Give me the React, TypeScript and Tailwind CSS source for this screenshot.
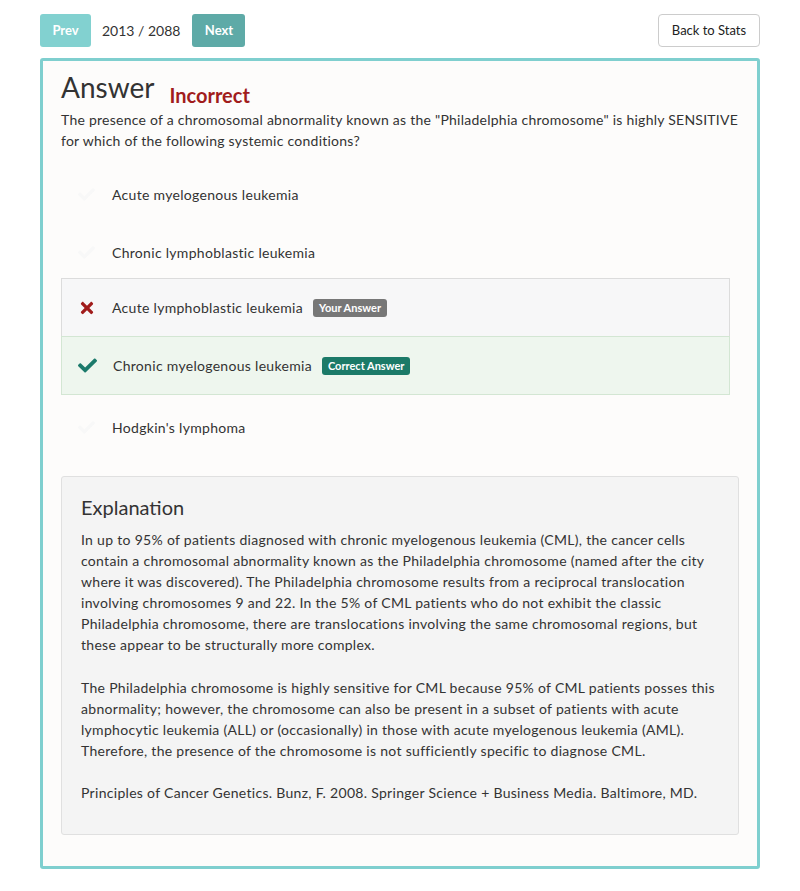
import { FaCheck, FaTimes } from "react-icons/fa";

type Option = {
  text: string;
  state?: "wrong" | "right";
};

const options: Option[] = [
  { text: "Acute myelogenous leukemia" },
  { text: "Chronic lymphoblastic leukemia" },
  { text: "Acute lymphoblastic leukemia", state: "wrong" },
  { text: "Chronic myelogenous leukemia", state: "right" },
  { text: "Hodgkin's lymphoma" },
];

function OptionRow({ opt }: { opt: Option }) {
  if (opt.state === "wrong") {
    return (
      <div className="flex h-[59px] items-center border border-[#dcdcdc] bg-[#f7f7f8] pl-[16px]">
        <FaTimes className="h-[18px] w-[18px] text-[#a11c1c]" />
        <span className="ml-[16px]">{opt.text}</span>
        <span className="ml-[10px] rounded-[3px] bg-[#777777] px-[6px] py-[2px] text-[11px] font-bold leading-[14px] tracking-normal text-white">
          Your Answer
        </span>
      </div>
    );
  }
  if (opt.state === "right") {
    return (
      <div className="-mt-px flex h-[59px] items-center border border-[#d3e6d3] bg-[#eef6ee] pl-[16px]">
        <FaCheck className="h-[19px] w-[19px] text-[#1b7a6b]" />
        <span className="ml-[16px]">{opt.text}</span>
        <span className="ml-[10px] rounded-[3px] bg-[#1b7a68] px-[6px] py-[2px] text-[11px] font-bold leading-[14px] tracking-normal text-white">
          Correct Answer
        </span>
      </div>
    );
  }
  return (
    <div className="flex h-[58px] items-center pl-[17px] pt-[6px]">
      <FaCheck className="h-[17px] w-[17px] text-[#f8f8f8]" />
      <span className="ml-[17px]">{opt.text}</span>
    </div>
  );
}

export default function App() {
  return (
    <div
      className="min-h-[891px] bg-white px-[40px] pt-[14px] text-[14px] leading-[21px] tracking-[0.3px] text-[#333333]"
      style={{ fontFamily: "Lato, 'Open Sans', sans-serif" }}
    >
      <div className="flex items-center justify-between">
        <div className="flex items-center">
          <button className="h-[33px] w-[51px] rounded-[3px] bg-[#82d1d0] text-[13px] font-bold tracking-normal text-white">
            Prev
          </button>
          <span className="ml-[11px] mr-[12px] text-[14px] tracking-normal">2013 / 2088</span>
          <button className="h-[33px] w-[53px] rounded-[3px] bg-[#5eaaa7] text-[13px] font-bold tracking-normal text-white">
            Next
          </button>
        </div>
        <button className="h-[33px] w-[102px] rounded-[4px] border border-[#cccccc] bg-white text-[13px] tracking-normal text-[#222222]">
          Back to Stats
        </button>
      </div>

      <div className="mt-[11px] rounded-[3px] border-[3px] border-[#7fcfcf] bg-[#fdfcfb] px-[18px] pb-[31px] pt-[8px]">
        <div className="flex items-end">
          <h1 className="text-[28px] leading-[36px] tracking-normal text-[#333333]">Answer</h1>
          <span className="mb-[-4px] ml-[15px] text-[20px] font-bold leading-[28px] tracking-normal text-[#a11c1c]">
            Incorrect
          </span>
        </div>
        <p className="mt-[4px] whitespace-nowrap tracking-[0.25px]">
          The presence of a chromosomal abnormality known as the "Philadelphia chromosome" is highly SENSITIVE
          <br />
          for which of the following systemic conditions?
        </p>

        <div className="mr-[9px] mt-[11px]">
          {options.map((opt) => (
            <OptionRow key={opt.text} opt={opt} />
          ))}
        </div>

        <div className="mt-[23px] whitespace-nowrap rounded-[3px] border border-[#e0e0e0] bg-[#f4f4f4] px-[19px] pb-[31px] pt-[16px]">
          <h2 className="mb-[8px] text-[20px] leading-[28px] tracking-normal text-[#333333]">Explanation</h2>
          <p>
            In up to 95% of patients diagnosed with chronic myelogenous leukemia (CML), the cancer cells
            <br />
            contain a chromosomal abnormality known as the Philadelphia chromosome (named after the city
            <br />
            where it was discovered). The Philadelphia chromosome results from a reciprocal translocation
            <br />
            involving chromosomes 9 and 22. In the 5% of CML patients who do not exhibit the classic
            <br />
            Philadelphia chromosome, there are translocations involving the same chromosomal regions, but
            <br />
            these appear to be structurally more complex.
          </p>
          <p className="mt-[22px]">
            The Philadelphia chromosome is highly sensitive for CML because 95% of CML patients posses this
            <br />
            abnormality; however, the chromosome can also be present in a subset of patients with acute
            <br />
            lymphocytic leukemia (ALL) or (occasionally) in those with acute myelogenous leukemia (AML).
            <br />
            Therefore, the presence of the chromosome is not sufficiently specific to diagnose CML.
          </p>
          <p className="mt-[21px]">
            Principles of Cancer Genetics. Bunz, F. 2008. Springer Science + Business Media. Baltimore, MD.
          </p>
        </div>
      </div>
    </div>
  );
}
